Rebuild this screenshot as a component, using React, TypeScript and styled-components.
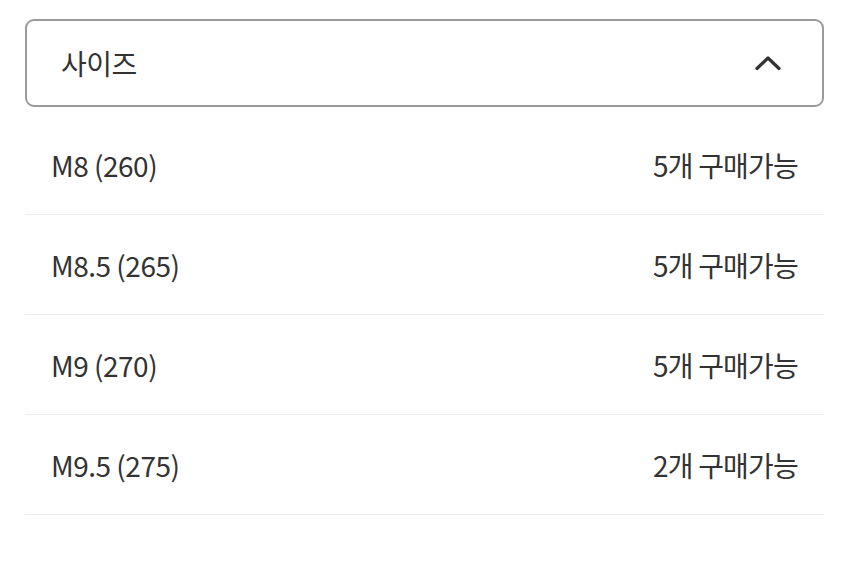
import React from "react";
import styled, { createGlobalStyle } from "styled-components";

const Global = createGlobalStyle`
  html, body { margin: 0; padding: 0; background: #fff; }
  body { font-family: "Noto Sans CJK KR", "Noto Sans", sans-serif; }
`;

const Wrap = styled.div`
  padding: 19px 26px 0 25px;
  display: flex;
  flex-direction: column;
`;

const SelectBox = styled.div`
  height: 88px;
  box-sizing: border-box;
  border: 2px solid #9a9a9a;
  border-radius: 9px;
  display: flex;
  align-items: center;
  justify-content: space-between;
  padding: 0 40px 0 34px;
  margin-bottom: 8px;
`;

const Label = styled.span`
  font-size: 28px;
  color: #333;
  letter-spacing: -0.5px;
`;

const Row = styled.div`
  height: 99px;
  box-sizing: content-box;
  border-bottom: 1px solid #ececec;
  display: flex;
  align-items: center;
  justify-content: space-between;
  padding: 0 26px 0 26px;
`;

const Size = styled.span`
  font-size: 28px;
  color: #333;
  letter-spacing: -0.5px;
`;

const Stock = styled.span`
  font-size: 28px;
  color: #333;
  letter-spacing: -0.8px;
`;

const items = [
  { size: "M8 (260)", count: 5 },
  { size: "M8.5 (265)", count: 5 },
  { size: "M9 (270)", count: 5 },
  { size: "M9.5 (275)", count: 2 },
];

export default function App() {
  return (
    <>
      <Global />
      <Wrap>
        <SelectBox>
          <Label>사이즈</Label>
          <svg width="28" height="18" viewBox="0 0 28 18" fill="none">
            <path d="M3 14.5 L14 4 L25 14.5" stroke="#333" strokeWidth="3.2" strokeLinecap="round" strokeLinejoin="round" />
          </svg>
        </SelectBox>
        {items.map((it) => (
          <Row key={it.size}>
            <Size>{it.size}</Size>
            <Stock>{it.count}개 구매가능</Stock>
          </Row>
        ))}
      </Wrap>
    </>
  );
}
